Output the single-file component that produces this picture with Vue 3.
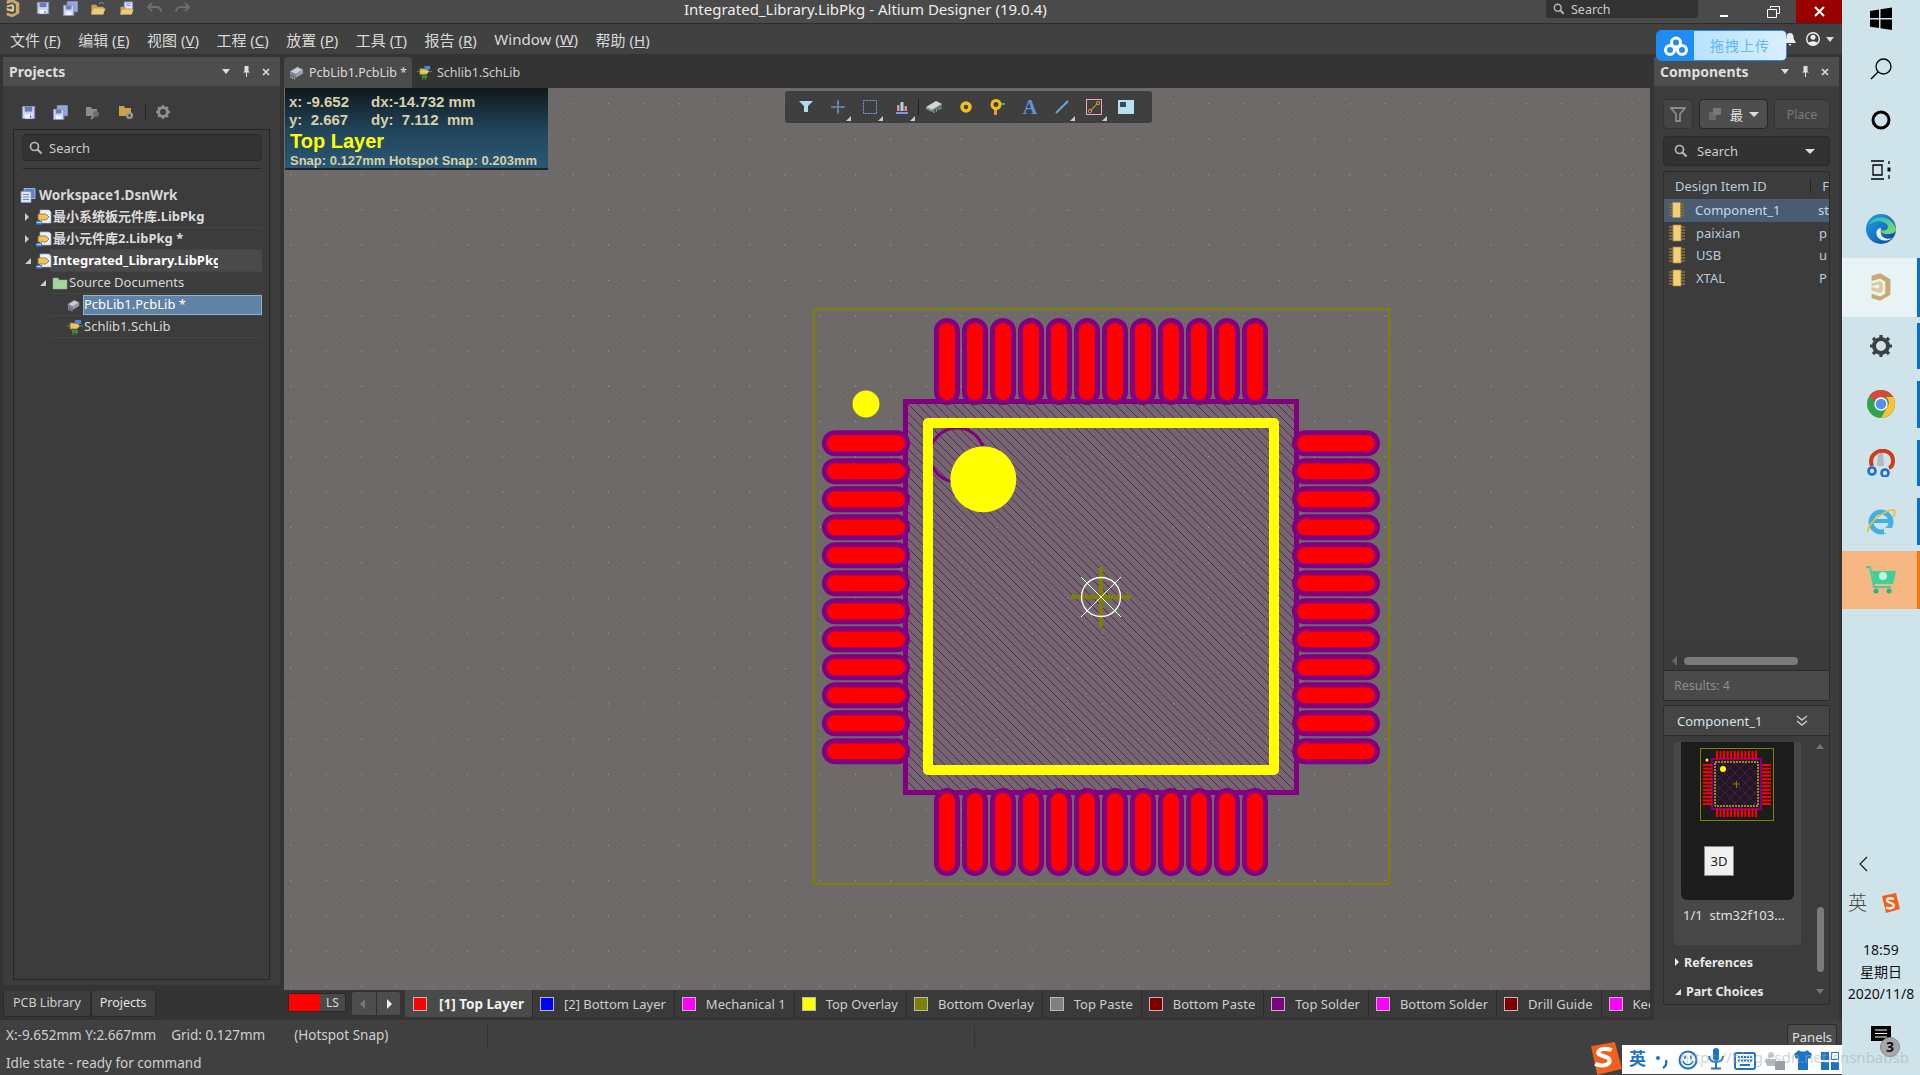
<script setup>
const menus = [['文件 ', 'F'], ['编辑 ', 'E'], ['视图 ', 'V'], ['工程 ', 'C'], ['放置 ', 'P'], ['工具 ', 'T'], ['报告 ', 'R'], ['Window ', 'W'], ['帮助 ', 'H']]
const tree = [
  { label: '最小系统板元件库.LibPkg', icon: 'ic-pkg', cls: 'lv1 bold', arrow: 'closed' },
  { label: '最小元件库2.LibPkg *', icon: 'ic-pkg', cls: 'lv1 bold', arrow: 'closed' },
  { label: 'Integrated_Library.LibPkg', icon: 'ic-pkg', cls: 'lv1 bold strong cur', arrow: 'open' },
  { label: 'Source Documents', icon: 'ic-folder', cls: 'lv2', arrow: 'open' },
  { label: 'PcbLib1.PcbLib *', icon: 'ic-pcb', cls: 'lv3 sel', arrow: '' },
  { label: 'Schlib1.SchLib', icon: 'ic-sch', cls: 'lv3', arrow: '' }
]
const comps = [['Component_1', 'st', true], ['paixian', 'p', false], ['USB', 'u', false], ['XTAL', 'P', false]]
const layers = [
  ['[1] Top Layer', '#ff0000', true], ['[2] Bottom Layer', '#0000ff', false], ['Mechanical 1', '#ff00ff', false],
  ['Top Overlay', '#ffff00', false], ['Bottom Overlay', '#808000', false], ['Top Paste', '#808080', false],
  ['Bottom Paste', '#800000', false], ['Top Solder', '#800080', false], ['Bottom Solder', '#ff00ff', false],
  ['Drill Guide', '#800000', false], ['Keep-Out Layer', '#ff00ff', false]
]
const idx = Array.from({ length: 12 }, (_, i) => i)
const miniPos = Array.from({ length: 12 }, (_, i) => i)
</script>

<template>
  <div class="app">
    <svg class="defs" width="0" height="0">
      <defs>
        <symbol id="ic-save" viewBox="0 0 16 16"><path d="M1.5 1.5h13v13h-13z" fill="#c9d3ee" stroke="#7f8fc4"/><path d="M4 2h8v5H4z" fill="#6b7bb8"/><path d="M4 10h8v4.500H4z" fill="#f2f4fb"/><path d="M9.500 11h1.500v3H9.500z" fill="#6b7bb8"/></symbol>
        <symbol id="ic-saveall" viewBox="0 0 16 16"><path d="M4.500 .5h11v11h-11z" fill="#9aa6d6" stroke="#7f8fc4"/><path d="M.5 4.500h11v11H.5z" fill="#c9d3ee" stroke="#7f8fc4"/><path d="M3 5h6v4H3z" fill="#6b7bb8"/><path d="M3 11h6v4H3z" fill="#f2f4fb"/></symbol>
        <symbol id="ic-open" viewBox="0 0 16 16"><path d="M1 4h5l1.500 2H14v8H1z" fill="#c9a24e"/><path d="M3 8h13l-2.500 6.500H.5z" fill="#eecb7b"/><path d="M9 3c2-2 4-2 5 0" fill="none" stroke="#7fa7d8"/></symbol>
        <symbol id="ic-openp" viewBox="0 0 16 16"><path d="M5 1h9v8H5z" fill="#e7ecf6" stroke="#7f8fc4"/><path d="M1 6h5l1 2h6v6H1z" fill="#c9a24e"/><path d="M3 9h12l-2 5.500H.5z" fill="#eecb7b"/><path d="M7 3h5M7 5h5" stroke="#7f8fc4"/></symbol>
        <symbol id="ic-pkg" viewBox="0 0 16 16"><path d="M4 1h9l2 2v11H4z" fill="#eef1f7" stroke="#9fb1d0" stroke-width=".7"/><path d="M2 5h8l3 3-3 3H2z" fill="#eec35c" stroke="#8e6f22" stroke-width=".8"/><path d="M0 12h6v3.500H0z" fill="#3f7fd0"/><path d="M1 13.500h4" stroke="#bcd6f5"/></symbol>
        <symbol id="ic-pcb" viewBox="0 0 16 16"><path d="M1 7l8-5 6 3-8 5z" fill="#c8ccd4" stroke="#7b8088" stroke-width=".6"/><path d="M1 7l6 3v4l-6-3z" fill="#7d828b"/><path d="M7 10l8-5v4l-8 5z" fill="#9aa0aa"/><path d="M2 12v2M4 13v2M6 14v1.500" stroke="#c8ccd4"/></symbol>
        <symbol id="ic-sch" viewBox="0 0 16 16"><path d="M3 4h7l3 3-3 3H3z" fill="#eec35c" stroke="#8e6f22" stroke-width=".8"/><path d="M8 1h6v4H8z" fill="#4d86d6"/><path d="M5 11h6v3H5z" fill="#2f8f3f"/><path d="M0 7h3M6 14v2M9 14v2M13 7h3" stroke="#37a04a"/></symbol>
        <symbol id="ic-folder" viewBox="0 0 16 16"><path d="M1 3h5l1 2h8v9H1z" fill="#a7d3a1" stroke="#86b381" stroke-width=".5"/></symbol>
        <symbol id="ic-chip" viewBox="0 0 18 18"><path d="M1 3h16M1 6h16M1 9h16M1 12h16M1 15h16" stroke="#8a7437" stroke-width="1.300"/><rect x="5" y="1" width="8" height="16" fill="#f3cf7a" stroke="#a9873e" stroke-width=".7"/></symbol>
        <symbol id="ic-search" viewBox="0 0 14 14"><circle cx="5.500" cy="5.500" r="4" fill="none" stroke="#b6b6b6" stroke-width="1.700"/><path d="M8.500 8.500l4 4" stroke="#b6b6b6" stroke-width="2.200"/></symbol>
        <symbol id="ic-altium" viewBox="0 0 28 32"><path d="M3 3l10-3 12 7v18l-12 7-10-3v-5l10 3 6-3V10l-6-4-10 3z" fill="#c8aa6e"/><path d="M3 12l10-3 3 3v9l-3 2-10-3v-4l8 2 1-1v-3l-1-1-8 2z" fill="#e0c891"/></symbol>
        <pattern id="fineGrid" x="284" y="88" width="7" height="7" patternUnits="userSpaceOnUse"><rect x="3" y="3" width="1" height="1" fill="#777372"/></pattern>
        <pattern id="coarseGrid" x="1314" y="774" width="35.300" height="35.300" patternUnits="userSpaceOnUse"><rect x="0" y="0" width="1" height="1" fill="#a9a5a4"/></pattern>
        <pattern id="hatch" x="0" y="0" width="9" height="9" patternUnits="userSpaceOnUse"><path d="M0 0L9 9" stroke="#8b008b" stroke-width="1" shape-rendering="crispEdges"/></pattern>
        <pattern id="miniHatch" width="10" height="10" patternUnits="userSpaceOnUse"><path d="M-1 -1L11 11M-1 9L1 11M9 -1L11 1M11 -1L-1 11" stroke="#800080" stroke-width=".7"/></pattern>
      </defs>
    </svg>

    <div class="main">
      <header class="titlebar">
        <div class="qa">
          <svg class="logo" width="16" height="20"><use href="#ic-altium" /></svg>
          <svg class="qi" width="14" height="14"><use href="#ic-save" /></svg>
          <svg class="qi" width="15" height="15"><use href="#ic-saveall" /></svg>
          <svg class="qi" width="16" height="15"><use href="#ic-open" /></svg>
          <svg class="qi" width="16" height="15"><use href="#ic-openp" /></svg>
          <svg class="qi dim" width="15" height="12" viewBox="0 0 15 12"><path d="M5 1L1 5l4 4M1 5h8c3 0 5 2 5 5" fill="none" stroke="#6f6f6f" stroke-width="1.800"/></svg>
          <svg class="qi dim" width="15" height="12" viewBox="0 0 15 12"><path d="M10 1l4 4-4 4M14 5H6c-3 0-5 2-5 5" fill="none" stroke="#6f6f6f" stroke-width="1.800"/></svg>
        </div>
        <div class="title">Integrated_Library.LibPkg - Altium Designer (19.0.4)</div>
        <div class="tsearch"><svg width="12" height="12"><use href="#ic-search" /></svg><span>Search</span></div>
        <div class="wbtn wm"><i class="wmin"></i></div>
        <div class="wbtn"><svg width="13" height="12" viewBox="0 0 13 12"><path d="M3.500 2.500v-2h9v7h-3M.5 3.500h9v8h-9z" fill="none" stroke="#fff"/></svg></div>
        <div class="wbtn wclose"><svg width="11" height="11" viewBox="0 0 11 11"><path d="M1 1l9 9M10 1l-9 9" stroke="#fff" stroke-width="2"/></svg></div>
      </header>

      <nav class="menubar">
        <span v-for="m in menus" :key="m[1]" class="menu">{{ m[0] }}(<u>{{ m[1] }}</u>)</span>
      </nav>

      <div class="work">
        <div class="leftcol">
          <section class="panel projects">
            <div class="phead">
              <b>Projects</b>
              <span class="pctl"><i class="tri"></i>
                <svg width="9" height="11" viewBox="0 0 9 11"><path d="M2.500 0h4v5l1.500 1.500H1L2.500 5zM4 6.500h1V11H4z" fill="#ddd"/></svg>
                <svg width="8" height="8" viewBox="0 0 8 8"><path d="M1 1l6 6M7 1L1 7" stroke="#ddd" stroke-width="1.600"/></svg></span>
            </div>
            <div class="ptools">
              <svg width="15" height="15"><use href="#ic-save" /></svg>
              <svg width="15" height="15"><use href="#ic-saveall" /></svg>
              <svg class="faded" width="16" height="15" viewBox="0 0 16 15"><path d="M1 2h5l1 2h5v7H1z" fill="#8c8c8c"/><circle cx="11" cy="9" r="3" fill="#6b6b6b"/><path d="M9 11l-3 3" stroke="#8c8c8c" stroke-width="2"/></svg>
              <svg width="16" height="16" viewBox="0 0 16 16"><path d="M1 2h5l1 2h6v8H1z" fill="#c9a24e"/><circle cx="11.500" cy="11.500" r="3.500" fill="#999"/><circle cx="11.500" cy="11.500" r="1.300" fill="#444"/></svg>
              <i class="vsep"></i>
              <svg width="14" height="14" viewBox="0 0 14 14"><circle cx="7" cy="7" r="4.500" fill="none" stroke="#8f8f8f" stroke-width="3"/><path d="M7 0v2.500M7 11.500V14M0 7h2.500M11.500 7H14M2 2l2 2M10 10l2 2M12 2l-2 2M4 10l-2 2" stroke="#8f8f8f" stroke-width="2"/></svg>
            </div>
            <div class="pbox">
              <div class="search"><svg width="14" height="14"><use href="#ic-search" /></svg><span>Search</span></div>
              <hr class="rule" />
              <div class="wsrow"><svg width="16" height="17" viewBox="0 0 16 16"><path d="M4 1h11v10H4z" fill="#5b86c6" stroke="#c5d6ef" stroke-width=".7"/><path d="M1 4h10v11H1z" fill="#dfe7f5" stroke="#7c99c9" stroke-width=".8"/><path d="M3 7h6M3 9.500h6M3 12h6" stroke="#6b87b8"/></svg><b>Workspace1.DsnWrk</b></div>
              <div v-for="r in tree" :key="r.label" class="trow" :class="r.cls">
                <i v-if="r.arrow" class="arr" :class="r.arrow"></i>
                <svg width="16" height="16"><use :href="'#' + r.icon" /></svg>
                <span class="tlabel">{{ r.label }}</span>
              </div>
            </div>
          </section>
          <div class="ltabs"><span class="ltab">PCB Library</span><span class="ltab on">Projects</span></div>
        </div>

        <div class="center">
          <div class="doctabs">
            <span class="dtab on"><svg width="15" height="15"><use href="#ic-pcb" /></svg>PcbLib1.PcbLib *</span>
            <span class="dtab"><svg width="15" height="15"><use href="#ic-sch" /></svg>Schlib1.SchLib</span>
          </div>
          <div class="canvas">
            <svg class="pcb" width="1366" height="902" viewBox="284 88 1366 902">
              <rect x="284" y="88" width="1366" height="902" fill="#6e6a69" />
              <rect x="284" y="88" width="1366" height="902" fill="url(#fineGrid)" />
              <rect x="284" y="88" width="1366" height="902" fill="url(#coarseGrid)" />
              <rect x="814" y="309" width="575" height="575" fill="none" stroke="#808000" stroke-width="2" />
              <rect x="905.500" y="401.500" width="391" height="391" fill="url(#hatch)" stroke="#800080" stroke-width="5" />
              <g fill="#ff0000" stroke="#800080" stroke-width="5">
                <rect v-for="i in idx" :key="'t' + i" :x="936.500 + 28 * i" y="320.500" width="21" height="82" rx="10.500" />
                <rect v-for="i in idx" :key="'b' + i" :x="936.500 + 28 * i" y="790.500" width="21" height="83" rx="10.500" />
                <rect v-for="i in idx" :key="'l' + i" x="824.500" :y="432.800 + 28 * i" width="83" height="21" rx="10.500" />
                <rect v-for="i in idx" :key="'r' + i" x="1294.500" :y="432.800 + 28 * i" width="83" height="21" rx="10.500" />
              </g>
              <circle cx="957" cy="455" r="27" fill="none" stroke="#800080" stroke-width="3" />
              <rect x="928" y="423" width="346" height="347" fill="none" stroke="#ffff00" stroke-width="10" stroke-linejoin="round" />
              <circle cx="866" cy="404" r="13.500" fill="#ffff00" />
              <circle cx="983.300" cy="479.300" r="33" fill="#ffff00" />
              <path d="M1071 597h60M1101 567v60" stroke="#808000" stroke-width="4" />
              <circle cx="1101" cy="597" r="19.500" fill="none" stroke="#fff" stroke-width="1.300" />
              <path d="M1081 577l40 40M1121 577l-40 40" stroke="#fff" stroke-width="1" />
            </svg>

            <div class="hud">
              <div class="hud-l"><span>x: -9.652</span><span>dx:-14.732 mm</span></div>
              <div class="hud-l"><span>y:&nbsp; 2.667</span><span>dy:&nbsp; 7.112&nbsp; mm</span></div>
              <div class="hud-top">Top Layer</div>
              <div class="hud-snap">Snap: 0.127mm Hotspot Snap: 0.203mm</div>
            </div>

            <div class="toolbar">
              <span class="tb"><svg width="14" height="12" viewBox="0 0 14 12"><path d="M0 0h14L9 5v6H5V5z" fill="#b4dcea"/></svg></span>
              <span class="tb more"><svg width="14" height="14" viewBox="0 0 14 14"><path d="M7 0v14M0 7h14" stroke="#7b9be0" stroke-width="1.200"/><path d="M3 6v2M11 6v2M6 3h2M6 11h2" stroke="#7b9be0"/></svg></span>
              <span class="tb more"><svg width="14" height="14" viewBox="0 0 14 14"><rect x=".5" y=".5" width="13" height="13" fill="none" stroke="#7b9be0" stroke-dasharray="2 1" /></svg></span>
              <span class="tb more"><svg width="14" height="13" viewBox="0 0 14 13"><path d="M2 4h2.500v6H2zM9.500 5H12v5H9.500z" fill="#f08a8a"/><path d="M5.500 1h3v9h-3z" fill="#a5d8ea"/><path d="M1 11h12v2H1z" fill="#7b9be0"/></svg></span>
              <i class="tbsep"></i>
              <span class="tb"><svg width="18" height="14" viewBox="0 0 18 14"><path d="M1 7l10-6 6 3-10 6z" fill="#d5d5d5"/><path d="M1 7l6 3v2L1 9z" fill="#8f8f8f"/><path d="M7 10l10-6v2L7 12z" fill="#7a7a7a"/><path d="M9 11v2M11.500 9.500v2M14 8v2M16 7v2" stroke="#7fc4e0"/></svg></span>
              <span class="tb"><svg width="12" height="12" viewBox="0 0 12 12"><circle cx="6" cy="6" r="4" fill="none" stroke="#eec01e" stroke-width="3.500"/><circle cx="6" cy="6" r="1" fill="#5a4a00"/></svg></span>
              <span class="tb"><svg width="16" height="16" viewBox="0 0 16 16"><path d="M4 10h3v6H4z" fill="#e59a3c"/><path d="M10 4h5v2h-5z" fill="#3fb54a"/><circle cx="6" cy="5.500" r="4" fill="none" stroke="#eec01e" stroke-width="3"/><circle cx="6" cy="5.500" r="1" fill="#5a4a00"/></svg></span>
              <span class="tb tba">A</span>
              <span class="tb more"><svg width="14" height="14" viewBox="0 0 14 14"><path d="M1 13L13 1" stroke="#6fa4e0" stroke-width="2"/></svg></span>
              <span class="tb more"><svg width="16" height="16" viewBox="0 0 16 16"><rect x=".5" y=".5" width="15" height="15" fill="none" stroke="#f2a0d2"/><path d="M4.500 11.500l7-7" stroke="#b8862b" stroke-width="1.300"/><circle cx="4" cy="12" r="1.700" fill="none" stroke="#d49a2c"/><circle cx="12" cy="4" r="1.700" fill="none" stroke="#d49a2c"/></svg></span>
              <span class="tb"><svg width="16" height="14" viewBox="0 0 16 14"><rect x="1" y="1" width="14" height="12" fill="#2d4d6a" stroke="#b8e0f2" stroke-width="2"/><path d="M2 7h6V2h6v10H2z" fill="#b8e0f2"/></svg></span>
            </div>
          </div>
          <div class="layerbar">
            <span class="cur-color"><i></i><b>LS</b></span>
            <span class="navs"><i class="nl"></i><i class="nr"></i></span>
            <span class="tabs">
              <span v-for="l in layers" :key="l[0]" class="ltb" :class="{ on: l[2] }">
                <i class="sw" :style="{ background: l[1] }"></i>{{ l[0] }}
              </span>
            </span>
          </div>
        </div>

        <section class="panel comps">
          <div class="phead">
            <b>Components</b>
            <span class="pctl"><i class="tri"></i>
              <svg width="9" height="11" viewBox="0 0 9 11"><path d="M2.500 0h4v5l1.500 1.500H1L2.500 5zM4 6.500h1V11H4z" fill="#ddd"/></svg>
              <svg width="8" height="8" viewBox="0 0 8 8"><path d="M1 1l6 6M7 1L1 7" stroke="#ddd" stroke-width="1.600"/></svg></span>
          </div>
          <div class="cbody">
            <div class="cbtns">
              <span class="cbtn fil"><svg width="16" height="15" viewBox="0 0 16 15"><path d="M1 1h14L10 7v7H6V7z" fill="none" stroke="#8a8a8a" stroke-width="1.800"/></svg></span>
              <span class="cbtn sel"><svg width="16" height="14" viewBox="0 0 16 14"><path d="M1 5h7v8H1z" fill="#6a6a6a"/><path d="M5 1h8v7H5z" fill="#777"/></svg><em>最</em><i class="tri big"></i></span>
              <span class="cbtn place">Place</span>
            </div>
            <div class="csearch"><svg width="14" height="14"><use href="#ic-search" /></svg><span>Search</span><i class="tri big"></i></div>
            <div class="clist">
              <div class="chead"><span>Design Item ID</span><i></i><span>F</span></div>
              <div v-for="c in comps" :key="c[0]" class="crow" :class="{ on: c[2] }">
                <svg width="18" height="18"><use href="#ic-chip" /></svg>
                <span class="cname">{{ c[0] }}</span><span class="cdesc">{{ c[1] }}</span>
              </div>
              <div class="cfill"></div>
              <div class="hscroll"><i class="hl"></i><i class="thumb"></i></div>
            </div>
            <div class="results">Results: 4</div>
            <div class="detail">
              <div class="dhead"><span>Component_1</span><svg width="12" height="12" viewBox="0 0 12 12"><path d="M1 1l5 4 5-4M1 6l5 4 5-4" fill="none" stroke="#ccc" stroke-width="1.400"/></svg></div>
              <div class="dbody">
                <div class="dmain">
                  <div class="card">
                    <div class="preview">
                      <svg class="mini" width="74" height="74" viewBox="0 0 74 74">
                        <rect x=".5" y=".5" width="73" height="72" fill="none" stroke="#808000" />
                        <rect x="12" y="11" width="49" height="50" fill="#1c1c1c" stroke="#800080" stroke-width="2" />
                        <rect x="12" y="11" width="49" height="50" fill="url(#miniHatch)" />
                        <g fill="#ff0000">
                          <rect v-for="i in miniPos" :key="'mt' + i" :x="16 + 3.550 * i" y="3" width="2" height="8" />
                          <rect v-for="i in miniPos" :key="'mb' + i" :x="16 + 3.550 * i" y="61" width="2" height="8" />
                          <rect v-for="i in miniPos" :key="'ml' + i" x="3" :y="16 + 3.550 * i" width="9" height="2" />
                          <rect v-for="i in miniPos" :key="'mr' + i" x="62" :y="16 + 3.550 * i" width="9" height="2" />
                        </g>
                        <rect x="15" y="14" width="43" height="44" fill="none" stroke="#ffff00" stroke-dasharray="2 1" />
                        <circle cx="7" cy="12" r="1.500" fill="#ffff00" />
                        <circle cx="23" cy="21" r="3" fill="#ffff00" />
                        <path d="M33 36h7M36.500 33v7" stroke="#808000" />
                      </svg>
                      <span class="b3d">3D</span>
                    </div>
                    <div class="part">1/1&nbsp; stm32f103...</div>
                  </div>
                  <div class="sect"><i class="arr closed w"></i>References</div>
                  <div class="sect"><i class="arr open w"></i>Part Choices</div>
                </div>
                <div class="vscroll"><i class="vu"></i><i class="vthumb"></i><i class="vd"></i></div>
              </div>
            </div>
          </div>
        </section>
      </div>

      <footer class="status">
        <div class="srow">
          <span class="s1">X:-9.652mm Y:2.667mm</span><span class="s2">Grid: 0.127mm</span><span class="s3">(Hotspot Snap)</span>
          <i class="sdiv d1"></i><i class="sdiv d2"></i>
          <span class="panels">Panels</span>
        </div>
        <div class="srow2">Idle state - ready for command</div>
      </footer>

      <div class="upload">
        <span class="upl"><svg width="24" height="20" viewBox="0 0 24 20"><circle cx="12" cy="6.500" r="4.500" fill="none" stroke="#fff" stroke-width="3"/><circle cx="6" cy="14" r="4.500" fill="none" stroke="#fff" stroke-width="3"/><circle cx="18" cy="14" r="4.500" fill="none" stroke="#fff" stroke-width="3"/></svg></span>
        <span class="upr">拖拽上传</span>
      </div>
      <div class="acct">
        <svg width="12" height="13" viewBox="0 0 12 13"><path d="M6 0c2.500 0 3.500 2 3.500 4.500S12 9 12 10H0c0-1 2.500-3 2.500-5.500S3.500 0 6 0zM4.500 11h3L6 13z" fill="#eee"/></svg>
        <svg class="user" width="14" height="14" viewBox="0 0 14 14"><circle cx="7" cy="7" r="6.300" fill="none" stroke="#eee" stroke-width="1.400"/><circle cx="7" cy="5.300" r="2.500" fill="#eee"/><path d="M2.500 11.500c1-3 8-3 9 0C10 13.500 4 13.500 2.500 11.500z" fill="#eee"/></svg>
        <i class="tri"></i>
      </div>
      <div class="tray">
        <svg class="sogou" width="36" height="33" viewBox="0 0 33 32"><path d="M3 4l23-4 7 26-24 6z" fill="#f2601c"/><path d="M23 8c-4-2-12-2-13 2s11 3 11 8-9 6-14 3" fill="none" stroke="#fff" stroke-width="4"/></svg>
        <span class="en">英</span>
        <svg width="14" height="16" viewBox="0 0 14 16"><circle cx="3" cy="4" r="2" fill="#1c74c8"/><path d="M11 6c1 3 0 6-3 8" fill="none" stroke="#1c74c8" stroke-width="2.200"/></svg>
        <svg width="20" height="20" viewBox="0 0 20 20"><circle cx="10" cy="10" r="8.500" fill="none" stroke="#1c74c8" stroke-width="2"/><path d="M5 11c2 5 8 5 10 0" fill="none" stroke="#1c74c8" stroke-width="1.600"/><path d="M7 6v3M13 6v3" stroke="#1c74c8" stroke-width="1.600"/></svg>
        <svg width="18" height="22" viewBox="0 0 18 22"><rect x="6" y="0" width="6" height="13" rx="3" fill="#1c74c8"/><path d="M2 8c0 8 14 8 14 0M9 15v5M4 20.500h10" fill="none" stroke="#1c74c8" stroke-width="2"/></svg>
        <svg width="22" height="18" viewBox="0 0 22 18"><rect x="1" y="1" width="20" height="16" rx="2" fill="none" stroke="#1c74c8" stroke-width="2"/><path d="M4 5h14M4 8.500h14" stroke="#1c74c8" stroke-width="2" stroke-dasharray="2 1"/><path d="M6 13h10" stroke="#1c74c8" stroke-width="2"/></svg>
        <svg width="20" height="18" viewBox="0 0 20 18"><circle cx="6" cy="3" r="3" fill="#c9ccd2"/><path d="M0 7h11v7H2z" fill="#b4b8bf"/><rect x="10" y="9" width="10" height="9" fill="#9aa0aa"/></svg>
        <svg width="18" height="20" viewBox="0 0 18 20"><path d="M5 0L0 4l2 5 2-1v12h10V8l2 1 2-5-5-4c-1 2-7 2-8 0z" fill="#1c74c8"/></svg>
        <svg width="18" height="18" viewBox="0 0 18 18"><path d="M0 0h8v8H0zM0 10h8v8H0zM10 10h8v8h-8z" fill="#1c74c8"/><path d="M10.500.5h7v7h-7z" fill="#fff" stroke="#1c74c8"/></svg>
      </div>
    </div>

    <aside class="side">
      <div class="si h1"><svg width="24" height="24" viewBox="0 0 24 24"><path d="M1 4l9-1.500V11H1zM11.500 2.300L23 .5V11H11.500zM1 12.500h9V21L1 19.700zM11.500 12.500H23V23l-11.500-1.800z" fill="#000"/></svg></div>
      <div class="si h2"><svg width="22" height="22" viewBox="0 0 22 22"><circle cx="13.500" cy="8.500" r="7.500" fill="none" stroke="#000" stroke-width="1.300"/><path d="M8 14l-7 7" stroke="#000" stroke-width="1.500"/></svg></div>
      <div class="si h3"><svg width="20" height="20" viewBox="0 0 20 20"><circle cx="10" cy="10" r="8" fill="none" stroke="#000" stroke-width="3"/></svg></div>
      <div class="si h4"><svg width="22" height="20" viewBox="0 0 22 20"><path d="M1 1h13M1 19h13M3 5h9v10H3zM19 1v3M19 15v4" fill="none" stroke="#000" stroke-width="1.300"/><path d="M17.500 7.500h3v4h-3z" fill="#000"/></svg></div>
      <div class="si h5"><svg width="30" height="30" viewBox="0 0 30 30"><defs><linearGradient id="edgeA" x1="0" y1="0" x2="1" y2="1"><stop offset="0" stop-color="#1ba4d8"/><stop offset=".55" stop-color="#1a6fc4"/><stop offset="1" stop-color="#0d3f8f"/></linearGradient><linearGradient id="edgeB" x1="0" y1="0" x2="1" y2="1"><stop offset="0" stop-color="#27b6d2"/><stop offset="1" stop-color="#7ee05c"/></linearGradient></defs><circle cx="15" cy="15" r="15" fill="url(#edgeA)"/><path d="M3 11C6 1 25-1 30 15c0 4-4 5-9 5-4 0-6-1-6-4 3 1 7 0 7-3 0-5-12-9-19-2z" fill="url(#edgeB)"/><path d="M15 14c-3 0-6 3-4 8 2 4 9 7 15 2-6 2-13 0-11-10z" fill="#e8f4f6"/></svg></div>
      <div class="si act"><svg width="24" height="30"><use href="#ic-altium" /></svg><i class="ind"></i></div>
      <div class="si run"><svg width="24" height="24" viewBox="0 0 24 24"><circle cx="12" cy="12" r="7" fill="none" stroke="#3a4145" stroke-width="4"/><path d="M12 1v5M12 18v5M1 12h5M18 12h5M4 4l3.500 3.500M16.500 16.500L20 20M20 4l-3.500 3.500M7.500 16.500L4 20" stroke="#3a4145" stroke-width="3.200"/></svg><i class="ind"></i></div>
      <div class="si run"><svg width="28" height="28" viewBox="0 0 28 28"><circle cx="14" cy="14" r="14" fill="#2fa24e"/><path d="M14 0a14 14 0 0 1 12.100 7H14a7 7 0 0 0-6.500 4L2.500 5.500A14 14 0 0 1 14 0z" fill="#e0433a"/><path d="M26.100 7A14 14 0 0 1 14 28l6-10.500A7 7 0 0 0 19 7z" fill="#fbc42f"/><circle cx="14" cy="14" r="6.700" fill="#fff"/><circle cx="14" cy="14" r="5.300" fill="#5a8df0"/></svg><i class="ind"></i></div>
      <div class="si run"><svg width="28" height="28" viewBox="0 0 28 28"><path d="M5 17C1 6 12-1 21 3c7 4 6 14 1 16" fill="none" stroke="#d03a1a" stroke-width="4"/><path d="M11 4h5l1 13h-7z" fill="#b5b8bc"/><circle cx="5" cy="22" r="3.500" fill="none" stroke="#1c6fd0" stroke-width="2.600"/><circle cx="18" cy="24" r="3.500" fill="none" stroke="#1c6fd0" stroke-width="2.600"/></svg><i class="ind"></i></div>
      <div class="si run"><svg width="30" height="28" viewBox="0 0 30 28"><circle cx="15" cy="15" r="10" fill="none" stroke="#3fb0e8" stroke-width="5"/><path d="M7 14h17" stroke="#3fb0e8" stroke-width="4"/><path d="M18 21h10v5H18z" fill="#cfe4ea"/><path d="M2 25C0 19 14 6 25 3c4-1 5 2 2 7" fill="none" stroke="#f2bf2e" stroke-width="1.800"/></svg><i class="ind"></i></div>
      <div class="si cart"><svg width="32" height="28" viewBox="0 0 32 28"><path d="M1 1h4l4 20h17" fill="none" stroke="#3fcf9e" stroke-width="1.800"/><path d="M7 5h24l-3 13H9z" fill="#3fcf9e"/><circle cx="18" cy="10" r="4" fill="#bff5dc"/><circle cx="11" cy="25" r="2.500" fill="#2faf86"/><circle cx="24" cy="25" r="2.500" fill="#2faf86"/></svg><i class="ind"></i></div>
      <div class="sfill"></div>
      <div class="chev"><svg width="9" height="16" viewBox="0 0 9 16"><path d="M8 1L1 8l7 7" fill="none" stroke="#111" stroke-width="1.100"/></svg></div>
      <div class="imes"><span class="ime">英</span><svg width="20" height="20" viewBox="0 0 20 20"><path d="M2 3l14-3 4 16-14 4z" fill="#f2601c"/><path d="M14 6c-3-1-7-1-7 1.500s7 2 7 5-5 3.500-8 2" fill="none" stroke="#fff" stroke-width="2.200"/></svg></div>
      <div class="clock"><span>18:59</span><span>星期日</span><span>2020/11/8</span></div>
      <div class="note">
        <svg width="20" height="18" viewBox="0 0 20 18"><path d="M0 0h20v15H0z" fill="#000"/><path d="M4 4h12M4 7.500h12M4 11h12" stroke="#fff" stroke-width="1.200"/></svg>
        <b>3</b>
      </div>
    </aside>
    <div class="mark">https://blog.csdn.net/snsnbabsb</div>
  </div>
</template>

<style>
html, body { margin: 0; background: #3a3a3a; overflow: hidden; }
</style>

<style scoped>
.app { width: 1920px; height: 1075px; display: flex; overflow: hidden; position: relative; font: 13px "Noto Sans", "Noto Sans CJK SC", sans-serif; color: #d8d8d8; }
.defs { position: absolute; }
i { display: block; font-style: normal; }
.main { width: 1842px; height: 1075px; display: flex; flex-direction: column; background: #343434; position: relative; flex: none; }

.titlebar { height: 23px; background: #4a4a4a; border-bottom: 1px solid #2e2e2e; display: flex; align-items: flex-start; position: relative; flex: none; }
.qa { display: flex; align-items: center; height: 16px; padding-left: 5px; }
.logo { margin-right: 15px; }
.qi { margin-right: 12.500px; flex: none; }
.title { position: absolute; left: 684px; top: -1px; font-size: 15px; line-height: 20px; color: #eee; white-space: nowrap; }
.tsearch { margin-left: auto; width: 152px; height: 18px; background: #333; border-radius: 0 0 3px 3px; display: flex; align-items: center; gap: 6px; padding-left: 7px; box-sizing: border-box; color: #ccc; font-size: 12.500px; flex: none; }
.wbtn { width: 46px; height: 23px; display: flex; align-items: center; justify-content: center; flex: none; }
.wm { width: 52px; }
.wmin { width: 8px; height: 2px; background: #fff; margin-top: 9px; }
.wclose { background: #990000; }

.menubar { height: 30px; background: #414141; display: flex; align-items: center; padding-left: 10px; flex: none; font-size: 15px; color: #d9d9d9; gap: 17.500px; }
.menu { white-space: pre; }

.work { height: 963px; margin-top: 3px; display: flex; flex: none; }
.leftcol { width: 277px; margin: 0 4px 0 3px; display: flex; flex-direction: column; flex: none; }
.panel { background: #3c3c3c; display: flex; flex-direction: column; }
.projects { height: 928px; padding-bottom: 5px; box-sizing: border-box; }
.phead { height: 29px; background: #4d4d4d; display: flex; align-items: center; padding: 0 10px 0 6px; flex: none; }
.phead b { font-size: 14px; font-weight: 700; color: #dedede; }
.pctl { margin-left: auto; display: flex; align-items: center; gap: 11.500px; }
.tri { width: 0; height: 0; border-left: 4px solid transparent; border-right: 4px solid transparent; border-top: 5px solid #ddd; }
.tri.big { border-left-width: 5px; border-right-width: 5px; border-top-width: 5px; }
.ptools { height: 43px; display: flex; align-items: center; padding: 9px 0 0 18px; gap: 17px; flex: none; box-sizing: border-box; }
.vsep { width: 1px; height: 16px; background: #252525; margin: 0 -7px 0 -6px; }
.pbox { flex: 1; margin: 0 10px; border: 1px solid #252525; padding: 4px 7px 0 8px; min-height: 0; overflow: hidden; }
.search { height: 27px; border: 1px solid #2a2a2a; border-radius: 4px; background: #333; display: flex; align-items: center; gap: 6px; padding-left: 6px; color: #ccc; box-sizing: border-box; }
.rule { border: 0; border-top: 1px solid #252525; margin: 7px 1px 16px; }
.wsrow { height: 22px; display: flex; align-items: center; gap: 3px; margin-left: -2px; font-size: 13.500px; color: #d8d8d8; margin-top: -1px; }
.wsrow b { font-weight: 700; }
.trow { height: 22px; display: flex; align-items: center; position: relative; white-space: nowrap; box-sizing: border-box; }
.trow::after { content: ""; position: absolute; left: 28px; right: 0; bottom: 0; height: 1px; background: #454545; }
.lv1 { padding-left: 14px; }
.lv2 { padding-left: 30px; }
.lv3 { padding-left: 45px; }
.tlabel { margin-left: 1px; height: 22px; line-height: 21px; overflow: hidden; flex: none; }
.bold .tlabel { font-weight: 700; width: 165px; color: #dcdcdc; margin-left: 1px; }
.strong .tlabel { color: #fff; }
.cur::before { content: ""; position: absolute; left: 28px; right: 0; top: 0; bottom: 0; background: #4a4a4a; }
.trow > * { position: relative; z-index: 1; }
.arr { position: absolute; width: 0; height: 0; }
.trow .arr { position: absolute; }
.lv1 .arr { left: 3px; top: 7px; }
.lv2 .arr { left: 18px; top: 7px; }
.arr.closed { border-top: 4px solid transparent; border-bottom: 4px solid transparent; border-left: 4px solid #ccc; }
.arr.open { border-bottom: 6px solid #ccc; border-left: 6px solid transparent; margin-top: 1px; }
.sel .tlabel { width: 179px; margin-left: 3px; background: #5f82a5; outline: 1px solid #8fb0d0; outline-offset: -1px; color: #fff; height: 20px; line-height: 19px; padding-left: 1px; box-sizing: border-box; }
.ltabs { display: flex; margin-top: 6px; }
.ltab { height: 26px; line-height: 24px; padding: 0 9px; box-sizing: border-box; background: #3d3d3d; border: 1px solid #2a2a2a; border-top: 0; border-radius: 0 0 3px 3px; font-size: 12.500px; color: #cfcfcf; }
.ltab.on { background: #404040; color: #e2e2e2; padding: 0 8px; }

.center { width: 1366px; display: flex; flex-direction: column; flex: none; }
.doctabs { height: 31px; display: flex; align-items: flex-end; flex: none; }
.dtab { height: 31px; display: flex; align-items: center; gap: 5px; padding: 0 5px; color: #cfcfcf; box-sizing: border-box; font-size: 12.500px; }
.dtab.on { background: #4b4b4b; border-radius: 3px 3px 0 0; width: 128px; color: #dcdcdc; white-space: nowrap; }
.canvas { height: 902px; position: relative; flex: none; overflow: hidden; }
.pcb { display: block; }
.hud { position: absolute; left: 1px; top: 0; width: 263px; height: 82px; box-sizing: border-box; padding: 5px 0 0 4px; background: linear-gradient(180deg, #10181d 0%, #21465c 55%, #2a5874 100%); border-bottom: 2px solid #17262f; font-family: "Liberation Sans", sans-serif; font-weight: 700; color: #d8d0a8; white-space: nowrap; }
.hud-l { font-size: 15px; line-height: 18px; display: flex; }
.hud-l span:first-child { width: 82px; }
.hud-top { font-size: 20px; line-height: 24px; color: #ffff00; margin-left: 1px; }
.hud-snap { font-size: 13px; line-height: 15px; margin-left: 1px; }
.toolbar { position: absolute; left: 501px; top: 3px; height: 32px; padding: 0 10px 0 5px; display: flex; align-items: center; background: #3f3f3f; border-radius: 3px; }
.tb { width: 32px; height: 32px; display: flex; align-items: center; justify-content: center; position: relative; flex: none; }
.tb.more::after { content: ""; position: absolute; right: 3px; bottom: 2px; border-bottom: 5px solid #ccc; border-left: 5px solid transparent; }
.tbsep { width: 1px; height: 16px; background: #1e1e1e; margin-right: -1px; }
.tba { font: 700 20px "Liberation Serif", serif; color: #5d95d6; }
.layerbar { height: 30px; display: flex; align-items: center; flex: none; overflow: hidden; padding-left: 4px; }
.cur-color { display: flex; height: 17px; border: 1px solid #2a2a2a; border-radius: 2px; margin-top: -5px; flex: none; background: #4a4a4a; }
.cur-color i { width: 31px; background: #ff0000; }
.cur-color b { width: 25px; text-align: center; font-weight: 400; font-size: 12px; line-height: 17px; }
.navs { margin: -3px 0 0 5px; width: 50px; height: 25px; background: #4d4d4d; border-radius: 3px; display: flex; flex: none; border: 1px solid #333; box-sizing: border-box; }
.nl, .nr { flex: 1; position: relative; }
.nl { border-right: 1px solid #2e2e2e; }
.nl::after { content: ""; position: absolute; left: 8px; top: 7px; border: 5px solid transparent; border-left: 0; border-right: 5px solid #777; }
.nr::after { content: ""; position: absolute; left: 10px; top: 7px; border: 5px solid transparent; border-right: 0; border-left: 5px solid #eee; }
.tabs { margin: -3px 0 0 4px; display: flex; flex: none; }
.ltb { height: 27px; display: flex; align-items: center; padding: 0 8px 0 7px; gap: 10px; border-right: 1px solid #2a2a2a; background: #3a3a3a; border-radius: 0 0 3px 3px; color: #cecece; white-space: nowrap; box-sizing: border-box; font-size: 13px; }
.ltb.on { background: #4a4a4a; color: #f0f0f0; font-weight: 700; padding: 0 8px 0 8px; gap: 12px; font-size: 13.500px; }
.sw { width: 12px; height: 12px; border: 1px solid #b9b9b9; flex: none; }

.comps { width: 185px; margin-left: 4px; flex: none; height: 963px; }
.cbody { flex: 1; padding: 13px 9px 15px 9px; display: flex; flex-direction: column; min-height: 0; }
.cbtns { display: flex; gap: 6px; height: 30px; flex: none; }
.cbtn { height: 30px; box-sizing: border-box; background: #444; border: 1px solid #333; border-radius: 4px; display: flex; align-items: center; justify-content: center; }
.fil { width: 30px; }
.cbtn.sel { width: 69px; background: #4e4e4e; border-color: #262626; gap: 6px; }
.cbtn.sel em { font-style: normal; color: #e5e5e5; font-size: 13px; }
.cbtn.place { width: 56px; color: #7a7a7a; font-size: 12.500px; }
.csearch { height: 30px; margin-top: 7px; background: #323232; border: 1px solid #2a2a2a; border-radius: 4px; box-sizing: border-box; display: flex; align-items: center; padding: 0 14px 0 10px; gap: 9px; color: #ccc; flex: none; }
.csearch .tri { margin-left: auto; }
.clist { flex: 1; margin-top: 5px; border: 1px solid #2b2b2b; border-bottom: 0; border-radius: 3px 3px 0 0; min-height: 0; display: flex; flex-direction: column; overflow: hidden; }
.chead { height: 27px; display: flex; align-items: center; padding-left: 11px; flex: none; color: #b9cbdc; }
.chead span:first-child { width: 140px; }
.chead i { width: 1px; height: 14px; background: #222; margin-right: 11px; }
.crow { height: 22.500px; display: flex; align-items: center; padding-left: 4px; flex: none; color: #b9cbdc; white-space: nowrap; }
.crow.on { background: #4a5d70; color: #c7d8e8; }
.cname { margin-left: 10px; width: 123px; flex: none; }
.cfill { flex: 1; }
.hscroll { height: 24px; padding-top: 6px; box-sizing: border-box; display: flex; align-items: center; flex: none; position: relative; background: #3a3a3a; }
.hl { border: 5px solid transparent; border-left: 0; border-right: 5px solid #666; margin-left: 8px; }
.thumb { width: 114px; height: 8px; border-radius: 4px; background: #7a7a7a; margin-left: 7px; }
.results { height: 31px; flex: none; background: #4a4a4a; border: 1px solid #2b2b2b; box-sizing: border-box; padding-left: 10px; line-height: 30px; color: #8e8e8e; font-size: 12.500px; }
.detail { height: 300px; flex: none; margin-top: 4px; border: 1px solid #2b2b2b; border-radius: 3px; box-sizing: border-box; overflow: hidden; }
.dhead { height: 30px; display: flex; align-items: center; justify-content: space-between; padding: 0 21px 0 13px; background: #454545; border-bottom: 1px solid #2b2b2b; color: #d5e2ee; box-sizing: border-box; }
.dbody { display: flex; height: 268px; }
.dmain { width: 141px; flex: none; padding: 6px 0 0 10px; box-sizing: border-box; }
.card { width: 127px; height: 203px; background: #484848; border-radius: 3px; padding: 0 10px 0 7px; box-sizing: border-box; }
.preview { height: 158px; width: 113px; background: #1c1c1c; border-radius: 0 0 6px 6px; position: relative; }
.mini { position: absolute; left: 19px; top: 6px; }
.b3d { position: absolute; left: 23px; top: 104px; width: 30px; height: 30px; line-height: 28px; text-align: center; background: #f0f0f0; border: 1px solid #888; box-sizing: border-box; color: #222; font-size: 13px; }
.part { margin-top: 6px; margin-left: 2px; color: #e0e0e0; white-space: nowrap; font-size: 13px; }
.sect { display: flex; align-items: center; gap: 5px; height: 24px; margin-top: 5px; font-weight: 700; color: #e8e8e8; font-size: 12.500px; padding-left: 1px; position: relative; }
.sect .arr { position: static; flex: none; }
.arr.closed.w { border-left-color: #eee; }
.arr.open.w { border-bottom-color: #ddd; }
.sect + .sect { margin-top: 5px; }
.vscroll { flex: 1; position: relative; }
.vu { position: absolute; left: 11px; top: 8px; border: 4px solid transparent; border-top: 0; border-bottom: 5px solid #777; }
.vd { position: absolute; left: 11px; bottom: 10px; border: 4px solid transparent; border-bottom: 0; border-top: 5px solid #777; }
.vthumb { position: absolute; left: 12px; top: 171px; width: 7px; height: 65px; border-radius: 4px; background: #7a7a7a; }

.status { height: 55px; flex: none; background: #404040; position: relative; color: #cfcfcf; font-size: 13.500px; }
.srow { height: 30px; display: flex; align-items: center; padding-left: 6px; white-space: pre; }
.s2 { margin-left: 15px; }
.s3 { margin-left: 29px; }
.sdiv { position: absolute; top: 5px; height: 23px; width: 1px; background: #333; }
.d1 { left: 487px; }
.d2 { left: 974px; }
.panels { position: absolute; left: 1787px; top: 4px; width: 50px; height: 26px; background: #4c4c4c; border: 1px solid #2b2b2b; border-radius: 3px 3px 0 0; text-align: center; line-height: 24px; box-sizing: border-box; color: #e0e0e0; font-size: 13px; }
.srow2 { height: 25px; line-height: 22px; padding-left: 6px; margin-top: 2px; }

.upload { position: absolute; left: 1656px; top: 30px; width: 131px; height: 31px; display: flex; border-radius: 5px; overflow: hidden; border: 1px solid #1e8cf0; box-sizing: border-box; }
.upl { width: 37px; background: #1e8cf0; display: flex; align-items: center; justify-content: center; }
.upr { flex: 1; background: linear-gradient(90deg, #b7e2fd, #d8f0ff); color: #66b6f0; text-align: center; line-height: 29px; font-size: 14px; letter-spacing: 1px; }
.acct { position: absolute; left: 1784px; top: 32px; display: flex; align-items: center; gap: 6px; }
.acct .user { margin-left: 4px; }
.tray { position: absolute; left: 1587px; top: 1042px; right: 0; height: 33px; display: flex; align-items: flex-end; gap: 9px; }
.tray::before { content: ""; position: absolute; left: 35px; right: 0; top: 3px; bottom: 1px; background: #fff; }
.tray > * { position: relative; margin-bottom: 5px; flex: none; }
.sogou { margin-bottom: 0 !important; margin-right: -3px; }
.en { color: #1c74c8; font-weight: 700; font-size: 17px; line-height: 22px; }
.mark { position: absolute; left: 1680px; top: 1046px; font-size: 15px; line-height: 22px; color: rgba(165, 175, 185, .55); white-space: nowrap; z-index: 3; }

.side { width: 78px; height: 1075px; background: #cfe4ea; display: flex; flex-direction: column; align-items: stretch; flex: none; position: relative; }
.si { height: 58.500px; display: flex; align-items: center; justify-content: center; position: relative; flex: none; }
.si.h1 { height: 38px; }
.si.h2 { height: 62px; }
.si.h3 { height: 40px; }
.si.h4 { height: 60px; }
.si.h5 { height: 58px; }
.si.act { background: #e8f3f6; }
.ind { position: absolute; right: 0; top: 6px; bottom: 6px; width: 3px; background: #0a6fd0; }
.act .ind { top: 0; bottom: 0; }
.si.cart { background: #f5b681; }
.cart .ind { background: #f07810; top: 0; bottom: 0; }
.sfill { flex: 1; }
.chev { height: 16px; padding-left: 17px; flex: none; }
.imes { display: flex; align-items: center; gap: 13px; padding-left: 6px; margin-top: 19px; flex: none; }
.ime { font-size: 19px; color: #444; font-weight: 300; line-height: 24px; }
.clock { display: flex; flex-direction: column; align-items: center; color: #111; font-size: 14px; line-height: 22px; margin-top: 24px; flex: none; }
.note { position: relative; height: 70px; flex: none; padding: 21px 0 0 29px; box-sizing: border-box; }
.note b { position: absolute; left: 38px; top: 32px; width: 20px; height: 20px; border-radius: 50%; background: #a6a8a8; border: 1px solid #888; box-sizing: border-box; text-align: center; line-height: 18px; color: #111; font-size: 14px; }
</style>
